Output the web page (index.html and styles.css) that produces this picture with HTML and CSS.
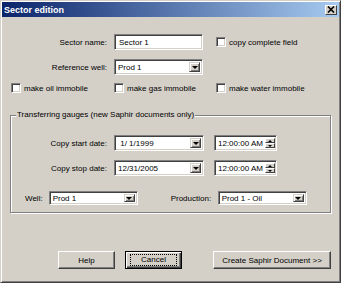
FILE: index.html
```html
<!DOCTYPE html>
<html lang="en">

<head>
    <meta charset="UTF-8">
    <title>Sector edition</title>
    <link rel="stylesheet" href="styles.css">
</head>

<body>
    <div class="window">
        <div class="titlebar">
            <span class="title">Sector edition</span>
            <div class="close-btn">
                <svg width="8" height="7" viewBox="0 0 8 7">
                    <path d="M1 0.5 L7 6.5 M7 0.5 L1 6.5" stroke="#000" stroke-width="1.6" fill="none"/>
                </svg>
            </div>
        </div>

        <!-- Sector name -->
        <div class="row row-name">
            <span class="lbl">Sector name:</span>
            <div class="field edit">Sector 1</div>
            <div class="check-item check-copy">
                <span class="check"></span>
                <span>copy complete field</span>
            </div>
        </div>

        <!-- Reference well -->
        <div class="row row-ref">
            <span class="lbl">Reference well:</span>
            <div class="field combo">
                <span class="combo-text">Prod 1</span>
                <span class="drop-btn"><i class="arrow"></i></span>
            </div>
        </div>

        <!-- Immobile flags -->
        <div class="row row-checks">
            <div class="check-item ci-oil">
                <span class="check"></span>
                <span>make oil immobile</span>
            </div>
            <div class="check-item ci-gas">
                <span class="check"></span>
                <span>make gas immobile</span>
            </div>
            <div class="check-item">
                <span class="check"></span>
                <span>make water immobile</span>
            </div>
        </div>

        <!-- Transferring gauges -->
        <div class="group">
            <div class="group-title">Transferring gauges (new Saphir documents only)</div>

            <div class="row date-row first">
                <span class="lbl date-lbl">Copy start date:</span>
                <div class="field combo date">
                    <span class="combo-text pre"> 1/ 1/1999</span>
                    <span class="drop-btn"><i class="arrow"></i></span>
                </div>
                <div class="field time">
                    <span class="combo-text">12:00:00 AM</span>
                    <span class="spin">
                        <span class="spin-btn"><i class="arrow up"></i></span>
                        <span class="spin-btn"><i class="arrow"></i></span>
                    </span>
                </div>
            </div>

            <div class="row date-row">
                <span class="lbl date-lbl">Copy stop date:</span>
                <div class="field combo date">
                    <span class="combo-text">12/31/2005</span>
                    <span class="drop-btn"><i class="arrow"></i></span>
                </div>
                <div class="field time">
                    <span class="combo-text">12:00:00 AM</span>
                    <span class="spin">
                        <span class="spin-btn"><i class="arrow up"></i></span>
                        <span class="spin-btn"><i class="arrow"></i></span>
                    </span>
                </div>
            </div>

            <div class="row well-row">
                <span class="well-lbl">Well:</span>
                <div class="field combo small">
                    <span class="combo-text">Prod 1</span>
                    <span class="drop-btn"><i class="arrow"></i></span>
                </div>
                <span class="prod-lbl">Production:</span>
                <div class="field combo small">
                    <span class="combo-text">Prod 1 - Oil</span>
                    <span class="drop-btn"><i class="arrow"></i></span>
                </div>
            </div>
        </div>

        <!-- Buttons -->
        <div class="row buttons">
            <div class="btn">Help</div>
            <div class="btn default"><span class="focus">Cancel</span></div>
            <div class="btn wide">Create Saphir Document &gt;&gt;</div>
        </div>
    </div>
</body>

</html>
```

FILE: styles.css
```css
body {
    margin: 0;
    font-family: "Liberation Sans", Arial, sans-serif;
    font-size: 8px;
    color: #000;
    background-color: #d4d0c8;
}

.window {
    width: 341px;
    height: 283px;
    box-sizing: border-box;
    padding: 1px;
    border: 1px solid;
    border-color: #d4d0c8 #404040 #404040 #d4d0c8;
    box-shadow: inset 1px 1px 0 #fff, inset -1px -1px 0 #808080;
    background-color: #d4d0c8;
}

.titlebar {
    height: 15px;
    display: flex;
    align-items: center;
    justify-content: space-between;
    background: linear-gradient(to right, #0a246a, #a6caf0);
}

.title {
    color: #fff;
    font-weight: bold;
    font-size: 9px;
    padding-left: 2px;
}

.close-btn {
    width: 12px;
    height: 10px;
    box-sizing: border-box;
    margin-right: 2px;
    background-color: #d4d0c8;
    border: 1px solid;
    border-color: #fff #404040 #404040 #fff;
    display: flex;
    align-items: center;
    justify-content: center;
}

.row {
    display: flex;
    align-items: center;
}

.lbl {
    width: 105px;
    text-align: right;
    margin-right: 7px;
}

.row-name {
    height: 16px;
    margin-top: 17px;
}

.row-ref {
    height: 16px;
    margin-top: 9px;
}

.field {
    height: 16px;
    box-sizing: border-box;
    background-color: #fff;
    border: 1px solid;
    border-color: #808080 #fff #fff #808080;
    box-shadow: inset 1px 1px 0 #404040, inset -1px -1px 0 #d4d0c8;
    display: flex;
    align-items: center;
    position: relative;
}

.edit {
    width: 89px;
    padding-left: 4px;
}

.combo {
    width: 89px;
    padding: 2px;
}

.combo-text {
    flex: 1;
    padding-left: 1px;
    white-space: nowrap;
}

.pre {
    white-space: pre;
}

.drop-btn {
    width: 11px;
    height: 100%;
    box-sizing: border-box;
    background-color: #d4d0c8;
    border: 1px solid;
    border-color: #d4d0c8 #404040 #404040 #d4d0c8;
    box-shadow: inset 1px 1px 0 #fff, inset -1px -1px 0 #808080;
    display: flex;
    align-items: center;
    justify-content: center;
}

.arrow {
    display: block;
    width: 0;
    height: 0;
    border-left: 3px solid transparent;
    border-right: 3px solid transparent;
    border-top: 3px solid #000;
}

.arrow.up {
    border-top: none;
    border-bottom: 3px solid #000;
}

.check-item {
    display: flex;
    align-items: center;
    gap: 3px;
}

.check {
    width: 10px;
    height: 10px;
    box-sizing: border-box;
    background-color: #fff;
    border: 1px solid;
    border-color: #808080 #fff #fff #808080;
    box-shadow: inset 1px 1px 0 #404040, inset -1px -1px 0 #d4d0c8;
}

.check-copy {
    margin-left: 13px;
}

.row-checks {
    height: 12px;
    margin-top: 7px;
    padding-left: 9px;
}

.ci-oil {
    width: 103px;
}

.ci-gas {
    width: 102px;
}

.group {
    margin: 21px 0 0 8px;
    width: 321px;
    box-sizing: border-box;
    border: 1px solid #808080;
    box-shadow: inset 1px 1px 0 #fff, 1px 1px 0 #fff;
    padding-bottom: 7px;
}

.group-title {
    width: fit-content;
    line-height: 10px;
    margin: -6px 0 0 5px;
    padding: 0 1px;
    background-color: #d4d0c8;
}

.date-row {
    height: 16px;
    margin-top: 9px;
}

.date-row.first {
    margin-top: 15px;
}

.date-lbl {
    width: 96px;
}

.date {
    width: 90px;
}

.time {
    width: 63px;
    margin-left: 10px;
    padding: 2px 1px 2px 2px;
}

.spin {
    width: 10px;
    height: 100%;
    display: flex;
    flex-direction: column;
}

.spin-btn {
    flex: 1;
    background-color: #d4d0c8;
    border: 1px solid;
    border-color: #fff #404040 #404040 #fff;
    display: flex;
    align-items: center;
    justify-content: center;
}

.spin-btn .arrow {
    border-left-width: 2px;
    border-right-width: 2px;
    border-top-width: 2px;
}

.spin-btn .arrow.up {
    border-bottom-width: 2px;
}

.well-row {
    height: 14px;
    margin-top: 15px;
    padding-left: 14px;
}

.well-lbl {
    margin-right: 6px;
}

.small {
    height: 14px;
    width: 89px;
}

.prod-lbl {
    width: 47px;
    margin-left: 33px;
}

.buttons {
    margin-top: 38px;
    padding-left: 56px;
    gap: 10px;
}

.btn {
    width: 57px;
    height: 18px;
    box-sizing: border-box;
    border: 1px solid;
    border-color: #fff #404040 #404040 #fff;
    box-shadow: inset -1px -1px 0 #808080;
    display: flex;
    align-items: center;
    justify-content: center;
}

.btn.default {
    border: 1px solid #000;
    box-shadow: inset 1px 1px 0 #fff, inset -1px -1px 0 #404040, inset -2px -2px 0 #808080;
}

.focus {
    width: 45px;
    height: 10px;
    line-height: 10px;
    text-align: center;
    outline: 1px dotted #000;
}

.btn.wide {
    width: 118px;
    margin-left: 21px;
}
```
